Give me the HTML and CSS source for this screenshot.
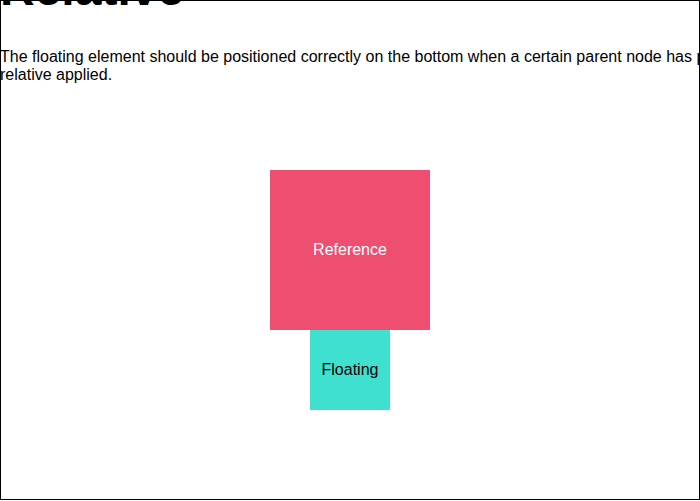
FILE: index.html
```html
<!DOCTYPE html>
<html lang="en">
<head>
<meta charset="utf-8">
<title>Relative</title>
<link rel="stylesheet" href="styles.css">
</head>
<body>
<main class="viewport">
  <header class="intro">
    <h1 class="title">Relative</h1>
    <p class="description">The floating element should be positioned correctly on the bottom when a certain parent node has position relative applied.</p>
  </header>
  <section class="stage">
    <div class="reference">Reference</div>
    <div class="floating">Floating</div>
  </section>
</main>
</body>
</html>
```
FILE: styles.css
```css
* {
  box-sizing: border-box;
}

body {
  margin: 0;
  background: #fff;
  color: #000;
  font-family: "Liberation Sans", Arial, sans-serif;
  font-size: 16px;
  line-height: 18px;
}

/* The outline is painted over the content, so the text runs under it. */
.viewport {
  display: flow-root;
  overflow: hidden;
  outline: 1px solid #000;
  outline-offset: -1px;
}

/* Wider than the viewport and scrolled partly out of its top edge. */
.intro {
  width: 780px;
  margin-top: -39px;
}

.title {
  margin: 0 0 31px;
  font-size: 48px;
  line-height: 56px;
}

.description {
  margin: 0;
}

.stage {
  display: flex;
  flex-direction: column;
  align-items: center;
  padding: 86px 0 90px;
}

.reference,
.floating {
  display: grid;
  place-items: center;
}

.reference {
  width: 160px;
  height: 160px;
  background: #ee4f71;
  color: #fff;
}

.floating {
  width: 80px;
  height: 80px;
  background: #40e0d0;
}
```
